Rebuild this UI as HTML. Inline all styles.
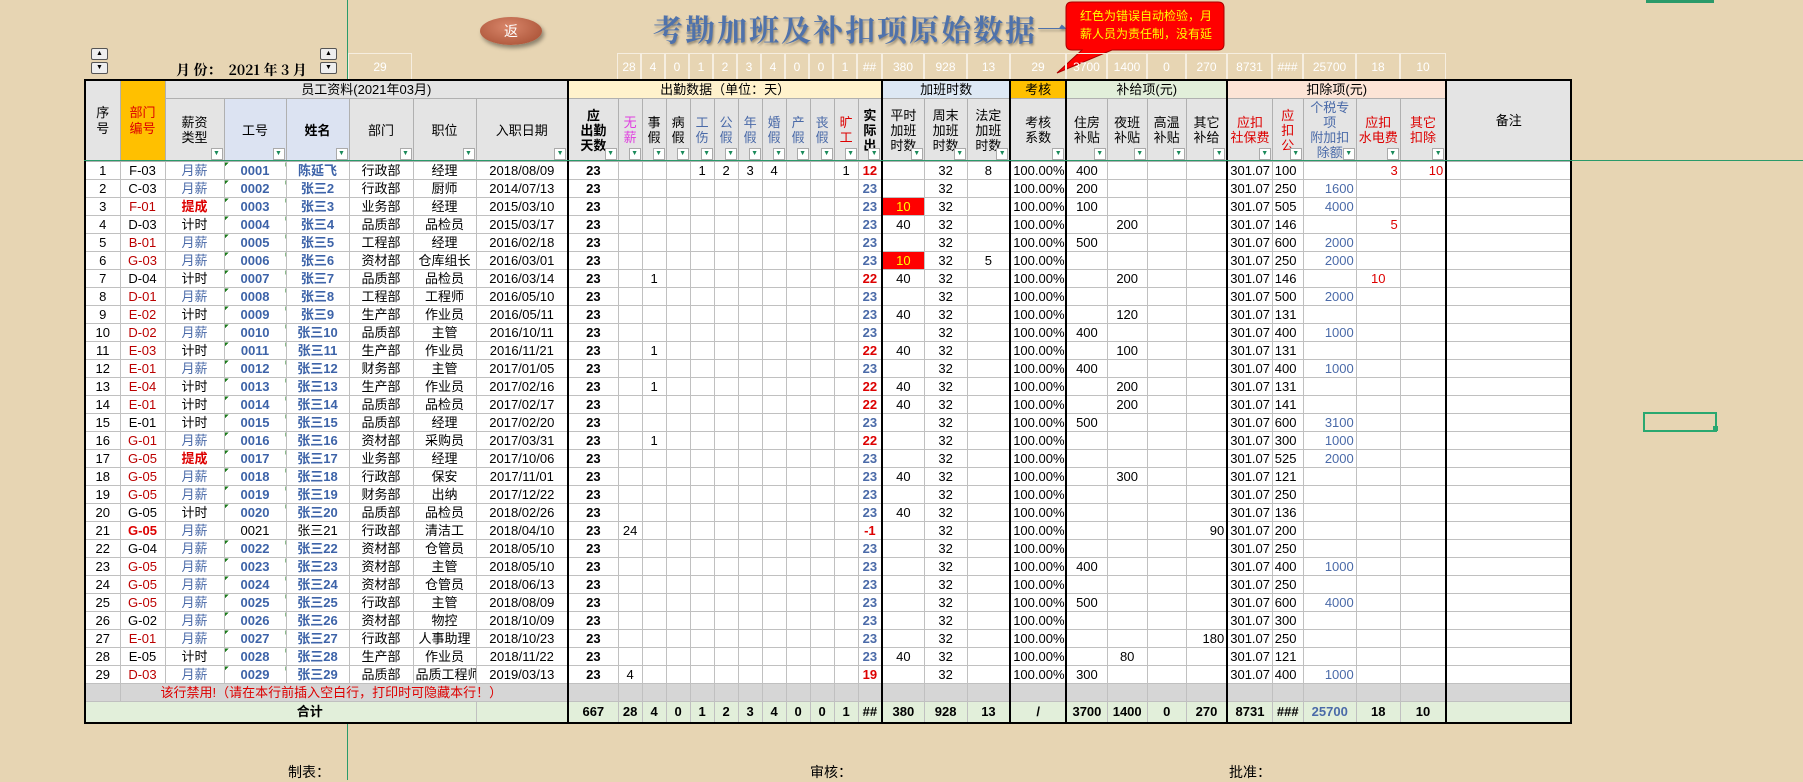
<!DOCTYPE html>
<html><head><meta charset="utf-8"><style>
body{margin:0;width:1803px;height:780px;overflow:hidden;background:#e7d5b3;font-family:"Liberation Sans Narrow","Liberation Sans","Noto Sans CJK SC",sans-serif;position:relative;font-size:13px;color:#000}
.abs{position:absolute}
table{border-collapse:collapse;table-layout:fixed;position:absolute;left:84px;top:79px;width:1487px;border:2px solid #000}
td{border:1px solid #c0c0c0;height:17px;padding:0 2px;text-align:center;white-space:nowrap;overflow:hidden;line-height:16px;background:#fff;font-size:13px}
col.L{border-left:2px solid #000}
.h1 td{background:#e4e4e4;height:17px;border-color:#b0b0b0}
.h2 td{background:#e4e4e4;height:62px;line-height:15px;border-color:#b0b0b0;position:relative;vertical-align:middle}
.h2 td i{position:absolute;right:1px;bottom:1px;width:10px;height:10px;background:#fff;border:1px solid #aaa;font-style:normal;font-size:7px;line-height:10px;color:#1a8a5a}
.r{color:#d00}.bl{color:#4a6aa8}.mg{color:#e040e0}.b{font-weight:bold}
.k{color:#b00}.id{color:#3d63a8;font-weight:bold;background:linear-gradient(135deg,#1a7a1a 3px,#fff 3px)}.nm{color:#3d63a8;font-weight:bold}
.rt{text-align:right}.lf{text-align:left}
.rb{background:#f00!important;color:#ff0}
.fb td{background:#d6d6d6}
.sum td{background:#e2efda;font-weight:bold;height:20px}
.nums{position:absolute;top:53px;height:26px;border:1px solid #f6eee0;border-bottom:none;color:#fff;font-size:12px;text-align:center;line-height:26px;box-sizing:border-box}
.btn{position:absolute;width:15px;height:10px;background:#eee;border:1px solid #555;border-radius:2px;font-size:7px;line-height:10px;text-align:center}
</style></head><body>
<div class="abs" style="left:347px;top:0;width:1px;height:780px;background:#2a9a6a"></div>
<div class="abs" style="left:1646px;top:0;width:68px;height:3px;background:#2a9a6a"></div>
<div class="abs" style="left:480px;top:17px;width:62px;height:28px;border-radius:50%;background:radial-gradient(ellipse at 45% 35%,#d9866a,#a24a2e);box-shadow:2px 3px 4px rgba(0,0,0,.4);color:#fff;text-align:center;line-height:28px;font-size:14px">返</div>
<div class="abs" style="left:653px;top:6px;font-size:30px;font-weight:bold;letter-spacing:2px;color:#4f72ab;text-shadow:1px 2px 2px rgba(0,0,0,.35);font-family:'Noto Serif CJK SC',serif">考勤加班及补扣项原始数据一览</div>
<svg class="abs" style="left:1040px;top:0" width="200" height="80"><path d="M32 2 H178 Q184 2 184 8 V44 Q184 50 178 50 H72 L17 73 L42 50 H32 Q26 50 26 44 V8 Q26 2 32 2Z" fill="#f00" stroke="#a00" stroke-width="1"/></svg>
<div class="abs" style="left:1070px;top:7px;width:152px;color:#ff0;font-size:12px;line-height:18px;text-align:center">红色为错误自动检验，月<br>薪人员为责任制，没有延</div>
<div class="btn" style="left:91px;top:48px">▲</div><div class="btn" style="left:91px;top:62px">▼</div>
<div class="btn" style="left:320px;top:48px">▲</div><div class="btn" style="left:320px;top:62px">▼</div>
<div class="abs" style="left:176px;top:60px;font-family:'Noto Serif CJK SC','Liberation Serif',serif;font-weight:bold;font-size:14px">月 份：&nbsp; 2021 年 3 月</div>
<div class="nums" style="left:348px;width:64px">29</div>
<div class="nums" style="left:617px;width:24px">28</div><div class="nums" style="left:641px;width:24px">4</div><div class="nums" style="left:665px;width:24px">0</div><div class="nums" style="left:689px;width:24px">1</div><div class="nums" style="left:713px;width:24px">2</div><div class="nums" style="left:737px;width:24px">3</div><div class="nums" style="left:761px;width:24px">4</div><div class="nums" style="left:785px;width:24px">0</div><div class="nums" style="left:809px;width:24px">0</div><div class="nums" style="left:833px;width:24px">1</div>
<div class="nums" style="left:857px;width:25px">##</div><div class="nums" style="left:882px;width:42px">380</div><div class="nums" style="left:924px;width:43px">928</div><div class="nums" style="left:967px;width:43px">13</div><div class="nums" style="left:1010px;width:56px">29</div><div class="nums" style="left:1066px;width:41px">3700</div><div class="nums" style="left:1107px;width:40px">1400</div><div class="nums" style="left:1147px;width:39px">0</div><div class="nums" style="left:1186px;width:41px">270</div><div class="nums" style="left:1227px;width:45px">8731</div><div class="nums" style="left:1272px;width:31px">###</div><div class="nums" style="left:1303px;width:53px">25700</div><div class="nums" style="left:1356px;width:44px">18</div><div class="nums" style="left:1400px;width:46px">10</div>
<table>
<colgroup><col style="width:35px"><col style="width:45px"><col style="width:59px"><col style="width:62px"><col style="width:63px"><col style="width:64px"><col style="width:63px"><col style="width:92px"><col class="L" style="width:50px"><col style="width:24px"><col style="width:24px"><col style="width:24px"><col style="width:24px"><col style="width:24px"><col style="width:24px"><col style="width:24px"><col style="width:24px"><col style="width:24px"><col style="width:24px"><col style="width:24px"><col class="L" style="width:42px"><col style="width:43px"><col style="width:43px"><col class="L" style="width:56px"><col class="L" style="width:41px"><col style="width:40px"><col style="width:39px"><col style="width:41px"><col class="L" style="width:45px"><col style="width:31px"><col style="width:53px"><col style="width:44px"><col style="width:46px"><col class="L" style="width:125px"></colgroup>
<tr class="h1"><td rowspan="2" style="height:80px">序<br>号</td><td rowspan="2" style="background:#ffc000;color:#d00">部门<br>编号</td><td colspan="6">员工资料(2021年03月)</td><td colspan="12" style="background:#fff2cc">出勤数据（单位：天）</td><td colspan="3" style="background:#dde8f4">加班时数</td><td style="background:#ffc000">考核</td><td colspan="4" style="background:#e2efda">补给项(元)</td><td colspan="5" style="background:#fce4d6">扣除项(元)</td><td rowspan="2">备注</td></tr>
<tr class="h2"><td>薪资<br>类型<i>▼</i></td><td style="background:#dce3f2">工号<i>▼</i></td><td style="background:#dce3f2" class="b">姓名<i>▼</i></td><td>部门<i>▼</i></td><td>职位<i>▼</i></td><td>入职日期<i>▼</i></td><td class="b">应<br>出勤<br>天数<i>▼</i></td><td class="mg">无<br>薪<i>▼</i></td><td>事<br>假<i>▼</i></td><td>病<br>假<i>▼</i></td><td class="bl">工<br>伤<i>▼</i></td><td class="bl">公<br>假<i>▼</i></td><td class="bl">年<br>假<i>▼</i></td><td class="bl">婚<br>假<i>▼</i></td><td class="bl">产<br>假<i>▼</i></td><td class="bl">丧<br>假<i>▼</i></td><td class="r">旷<br>工<i>▼</i></td><td class="b">实<br>际<br>出<i>▼</i></td><td>平时<br>加班<br>时数<i>▼</i></td><td>周末<br>加班<br>时数<i>▼</i></td><td>法定<br>加班<br>时数<i>▼</i></td><td>考核<br>系数<i>▼</i></td><td>住房<br>补贴<i>▼</i></td><td>夜班<br>补贴<i>▼</i></td><td>高温<br>补贴<i>▼</i></td><td>其它<br>补给<i>▼</i></td><td class="r">应扣<br>社保费<i>▼</i></td><td class="r">应<br>扣<br>公<i>▼</i></td><td class="bl">个税专<br>项<br>附加扣<br>除额<i>▼</i></td><td class="r">应扣<br>水电费<i>▼</i></td><td class="r">其它<br>扣除<i>▼</i></td></tr>
<tr><td>1</td><td>F-03</td><td class="bl">月薪</td><td class="id">0001</td><td class="nm">陈延飞</td><td>行政部</td><td>经理</td><td>2018/08/09</td><td class="b">23</td><td></td><td></td><td></td><td>1</td><td>2</td><td>3</td><td>4</td><td></td><td></td><td>1</td><td class="b r">12</td><td></td><td>32</td><td>8</td><td>100.00%</td><td>400</td><td></td><td></td><td></td><td class="lf">301.07</td><td class="lf">100</td><td></td><td class="rt r">3</td><td class="rt r">10</td><td></td></tr>
<tr><td>2</td><td>C-03</td><td class="bl">月薪</td><td class="id">0002</td><td class="nm">张三2</td><td>行政部</td><td>厨师</td><td>2014/07/13</td><td class="b">23</td><td></td><td></td><td></td><td></td><td></td><td></td><td></td><td></td><td></td><td></td><td class="b bl">23</td><td></td><td>32</td><td></td><td>100.00%</td><td>200</td><td></td><td></td><td></td><td class="lf">301.07</td><td class="lf">250</td><td class="rt bl">1600</td><td></td><td></td><td></td></tr>
<tr><td>3</td><td class="k">F-01</td><td class="r b">提成</td><td class="id">0003</td><td class="nm">张三3</td><td>业务部</td><td>经理</td><td>2015/03/10</td><td class="b">23</td><td></td><td></td><td></td><td></td><td></td><td></td><td></td><td></td><td></td><td></td><td class="b bl">23</td><td class="rb">10</td><td>32</td><td></td><td>100.00%</td><td>100</td><td></td><td></td><td></td><td class="lf">301.07</td><td class="lf">505</td><td class="rt bl">4000</td><td></td><td></td><td></td></tr>
<tr><td>4</td><td>D-03</td><td>计时</td><td class="id">0004</td><td class="nm">张三4</td><td>品质部</td><td>品检员</td><td>2015/03/17</td><td class="b">23</td><td></td><td></td><td></td><td></td><td></td><td></td><td></td><td></td><td></td><td></td><td class="b bl">23</td><td>40</td><td>32</td><td></td><td>100.00%</td><td></td><td>200</td><td></td><td></td><td class="lf">301.07</td><td class="lf">146</td><td></td><td class="rt r">5</td><td></td><td></td></tr>
<tr><td>5</td><td class="k">B-01</td><td class="bl">月薪</td><td class="id">0005</td><td class="nm">张三5</td><td>工程部</td><td>经理</td><td>2016/02/18</td><td class="b">23</td><td></td><td></td><td></td><td></td><td></td><td></td><td></td><td></td><td></td><td></td><td class="b bl">23</td><td></td><td>32</td><td></td><td>100.00%</td><td>500</td><td></td><td></td><td></td><td class="lf">301.07</td><td class="lf">600</td><td class="rt bl">2000</td><td></td><td></td><td></td></tr>
<tr><td>6</td><td class="k">G-03</td><td class="bl">月薪</td><td class="id">0006</td><td class="nm r">张三6</td><td>资材部</td><td>仓库组长</td><td>2016/03/01</td><td class="b">23</td><td></td><td></td><td></td><td></td><td></td><td></td><td></td><td></td><td></td><td></td><td class="b bl">23</td><td class="rb">10</td><td>32</td><td>5</td><td>100.00%</td><td></td><td></td><td></td><td></td><td class="lf">301.07</td><td class="lf">250</td><td class="rt bl">2000</td><td></td><td></td><td></td></tr>
<tr><td>7</td><td>D-04</td><td>计时</td><td class="id">0007</td><td class="nm">张三7</td><td>品质部</td><td>品检员</td><td>2016/03/14</td><td class="b">23</td><td></td><td>1</td><td></td><td></td><td></td><td></td><td></td><td></td><td></td><td></td><td class="b r">22</td><td>40</td><td>32</td><td></td><td>100.00%</td><td></td><td>200</td><td></td><td></td><td class="lf">301.07</td><td class="lf">146</td><td></td><td class="r">10</td><td></td><td></td></tr>
<tr><td>8</td><td class="k">D-01</td><td class="bl">月薪</td><td class="id">0008</td><td class="nm">张三8</td><td>工程部</td><td>工程师</td><td>2016/05/10</td><td class="b">23</td><td></td><td></td><td></td><td></td><td></td><td></td><td></td><td></td><td></td><td></td><td class="b bl">23</td><td></td><td>32</td><td></td><td>100.00%</td><td></td><td></td><td></td><td></td><td class="lf">301.07</td><td class="lf">500</td><td class="rt bl">2000</td><td></td><td></td><td></td></tr>
<tr><td>9</td><td class="k">E-02</td><td>计时</td><td class="id">0009</td><td class="nm">张三9</td><td>生产部</td><td>作业员</td><td>2016/05/11</td><td class="b">23</td><td></td><td></td><td></td><td></td><td></td><td></td><td></td><td></td><td></td><td></td><td class="b bl">23</td><td>40</td><td>32</td><td></td><td>100.00%</td><td></td><td>120</td><td></td><td></td><td class="lf">301.07</td><td class="lf">131</td><td></td><td></td><td></td><td></td></tr>
<tr><td>10</td><td class="k">D-02</td><td class="bl">月薪</td><td class="id">0010</td><td class="nm">张三10</td><td>品质部</td><td>主管</td><td>2016/10/11</td><td class="b">23</td><td></td><td></td><td></td><td></td><td></td><td></td><td></td><td></td><td></td><td></td><td class="b bl">23</td><td></td><td>32</td><td></td><td>100.00%</td><td>400</td><td></td><td></td><td></td><td class="lf">301.07</td><td class="lf">400</td><td class="rt bl">1000</td><td></td><td></td><td></td></tr>
<tr><td>11</td><td class="k">E-03</td><td>计时</td><td class="id">0011</td><td class="nm">张三11</td><td>生产部</td><td>作业员</td><td>2016/11/21</td><td class="b">23</td><td></td><td>1</td><td></td><td></td><td></td><td></td><td></td><td></td><td></td><td></td><td class="b r">22</td><td>40</td><td>32</td><td></td><td>100.00%</td><td></td><td>100</td><td></td><td></td><td class="lf">301.07</td><td class="lf">131</td><td></td><td></td><td></td><td></td></tr>
<tr><td>12</td><td class="k">E-01</td><td class="bl">月薪</td><td class="id">0012</td><td class="nm">张三12</td><td>财务部</td><td>主管</td><td>2017/01/05</td><td class="b">23</td><td></td><td></td><td></td><td></td><td></td><td></td><td></td><td></td><td></td><td></td><td class="b bl">23</td><td></td><td>32</td><td></td><td>100.00%</td><td>400</td><td></td><td></td><td></td><td class="lf">301.07</td><td class="lf">400</td><td class="rt bl">1000</td><td></td><td></td><td></td></tr>
<tr><td>13</td><td class="k">E-04</td><td>计时</td><td class="id">0013</td><td class="nm">张三13</td><td>生产部</td><td>作业员</td><td>2017/02/16</td><td class="b">23</td><td></td><td>1</td><td></td><td></td><td></td><td></td><td></td><td></td><td></td><td></td><td class="b r">22</td><td>40</td><td>32</td><td></td><td>100.00%</td><td></td><td>200</td><td></td><td></td><td class="lf">301.07</td><td class="lf">131</td><td></td><td></td><td></td><td></td></tr>
<tr><td>14</td><td class="k">E-01</td><td>计时</td><td class="id">0014</td><td class="nm">张三14</td><td>品质部</td><td>品检员</td><td>2017/02/17</td><td class="b">23</td><td></td><td></td><td></td><td></td><td></td><td></td><td></td><td></td><td></td><td></td><td class="b r">22</td><td>40</td><td>32</td><td></td><td>100.00%</td><td></td><td>200</td><td></td><td></td><td class="lf">301.07</td><td class="lf">141</td><td></td><td></td><td></td><td></td></tr>
<tr><td>15</td><td>E-01</td><td>计时</td><td class="id">0015</td><td class="nm">张三15</td><td>品质部</td><td>经理</td><td>2017/02/20</td><td class="b">23</td><td></td><td></td><td></td><td></td><td></td><td></td><td></td><td></td><td></td><td></td><td class="b bl">23</td><td></td><td>32</td><td></td><td>100.00%</td><td>500</td><td></td><td></td><td></td><td class="lf">301.07</td><td class="lf">600</td><td class="rt bl">3100</td><td></td><td></td><td></td></tr>
<tr><td>16</td><td class="k">G-01</td><td class="bl">月薪</td><td class="id">0016</td><td class="nm r">张三16</td><td>资材部</td><td>采购员</td><td>2017/03/31</td><td class="b">23</td><td></td><td>1</td><td></td><td></td><td></td><td></td><td></td><td></td><td></td><td></td><td class="b r">22</td><td></td><td>32</td><td></td><td>100.00%</td><td></td><td></td><td></td><td></td><td class="lf">301.07</td><td class="lf">300</td><td class="rt bl">1000</td><td></td><td></td><td></td></tr>
<tr><td>17</td><td class="k">G-05</td><td class="r b">提成</td><td class="id">0017</td><td class="nm">张三17</td><td>业务部</td><td>经理</td><td>2017/10/06</td><td class="b">23</td><td></td><td></td><td></td><td></td><td></td><td></td><td></td><td></td><td></td><td></td><td class="b bl">23</td><td></td><td>32</td><td></td><td>100.00%</td><td></td><td></td><td></td><td></td><td class="lf">301.07</td><td class="lf">525</td><td class="rt bl">2000</td><td></td><td></td><td></td></tr>
<tr><td>18</td><td class="k">G-05</td><td class="bl">月薪</td><td class="id">0018</td><td class="nm">张三18</td><td>行政部</td><td>保安</td><td>2017/11/01</td><td class="b">23</td><td></td><td></td><td></td><td></td><td></td><td></td><td></td><td></td><td></td><td></td><td class="b bl">23</td><td>40</td><td>32</td><td></td><td>100.00%</td><td></td><td>300</td><td></td><td></td><td class="lf">301.07</td><td class="lf">121</td><td></td><td></td><td></td><td></td></tr>
<tr><td>19</td><td class="k">G-05</td><td class="bl">月薪</td><td class="id">0019</td><td class="nm">张三19</td><td>财务部</td><td>出纳</td><td>2017/12/22</td><td class="b">23</td><td></td><td></td><td></td><td></td><td></td><td></td><td></td><td></td><td></td><td></td><td class="b bl">23</td><td></td><td>32</td><td></td><td>100.00%</td><td></td><td></td><td></td><td></td><td class="lf">301.07</td><td class="lf">250</td><td></td><td></td><td></td><td></td></tr>
<tr><td>20</td><td>G-05</td><td>计时</td><td class="id">0020</td><td class="nm">张三20</td><td>品质部</td><td>品检员</td><td>2018/02/26</td><td class="b">23</td><td></td><td></td><td></td><td></td><td></td><td></td><td></td><td></td><td></td><td></td><td class="b bl">23</td><td>40</td><td>32</td><td></td><td>100.00%</td><td></td><td></td><td></td><td></td><td class="lf">301.07</td><td class="lf">136</td><td></td><td></td><td></td><td></td></tr>
<tr><td>21</td><td class="r b">G-05</td><td class="bl">月薪</td><td>0021</td><td>张三21</td><td>行政部</td><td>清洁工</td><td>2018/04/10</td><td class="b">23</td><td>24</td><td></td><td></td><td></td><td></td><td></td><td></td><td></td><td></td><td></td><td class="b r">-1</td><td></td><td>32</td><td></td><td>100.00%</td><td></td><td></td><td></td><td class="rt">90</td><td class="lf">301.07</td><td class="lf">200</td><td></td><td></td><td></td><td></td></tr>
<tr><td>22</td><td>G-04</td><td class="bl">月薪</td><td class="id">0022</td><td class="nm">张三22</td><td>资材部</td><td>仓管员</td><td>2018/05/10</td><td class="b">23</td><td></td><td></td><td></td><td></td><td></td><td></td><td></td><td></td><td></td><td></td><td class="b bl">23</td><td></td><td>32</td><td></td><td>100.00%</td><td></td><td></td><td></td><td></td><td class="lf">301.07</td><td class="lf">250</td><td></td><td></td><td></td><td></td></tr>
<tr><td>23</td><td class="k">G-05</td><td class="bl">月薪</td><td class="id">0023</td><td class="nm">张三23</td><td>资材部</td><td>主管</td><td>2018/05/10</td><td class="b">23</td><td></td><td></td><td></td><td></td><td></td><td></td><td></td><td></td><td></td><td></td><td class="b bl">23</td><td></td><td>32</td><td></td><td>100.00%</td><td>400</td><td></td><td></td><td></td><td class="lf">301.07</td><td class="lf">400</td><td class="rt bl">1000</td><td></td><td></td><td></td></tr>
<tr><td>24</td><td class="k">G-05</td><td class="bl">月薪</td><td class="id">0024</td><td class="nm">张三24</td><td>资材部</td><td>仓管员</td><td>2018/06/13</td><td class="b">23</td><td></td><td></td><td></td><td></td><td></td><td></td><td></td><td></td><td></td><td></td><td class="b bl">23</td><td></td><td>32</td><td></td><td>100.00%</td><td></td><td></td><td></td><td></td><td class="lf">301.07</td><td class="lf">250</td><td></td><td></td><td></td><td></td></tr>
<tr><td>25</td><td class="k">G-05</td><td class="bl">月薪</td><td class="id">0025</td><td class="nm">张三25</td><td>行政部</td><td>主管</td><td>2018/08/09</td><td class="b">23</td><td></td><td></td><td></td><td></td><td></td><td></td><td></td><td></td><td></td><td></td><td class="b bl">23</td><td></td><td>32</td><td></td><td>100.00%</td><td>500</td><td></td><td></td><td></td><td class="lf">301.07</td><td class="lf">600</td><td class="rt bl">4000</td><td></td><td></td><td></td></tr>
<tr><td>26</td><td>G-02</td><td class="bl">月薪</td><td class="id">0026</td><td class="nm">张三26</td><td>资材部</td><td>物控</td><td>2018/10/09</td><td class="b">23</td><td></td><td></td><td></td><td></td><td></td><td></td><td></td><td></td><td></td><td></td><td class="b bl">23</td><td></td><td>32</td><td></td><td>100.00%</td><td></td><td></td><td></td><td></td><td class="lf">301.07</td><td class="lf">300</td><td></td><td></td><td></td><td></td></tr>
<tr><td>27</td><td class="k">E-01</td><td class="bl">月薪</td><td class="id">0027</td><td class="nm">张三27</td><td>行政部</td><td>人事助理</td><td>2018/10/23</td><td class="b">23</td><td></td><td></td><td></td><td></td><td></td><td></td><td></td><td></td><td></td><td></td><td class="b bl">23</td><td></td><td>32</td><td></td><td>100.00%</td><td></td><td></td><td></td><td class="rt">180</td><td class="lf">301.07</td><td class="lf">250</td><td></td><td></td><td></td><td></td></tr>
<tr><td>28</td><td>E-05</td><td>计时</td><td class="id">0028</td><td class="nm">张三28</td><td>生产部</td><td>作业员</td><td>2018/11/22</td><td class="b">23</td><td></td><td></td><td></td><td></td><td></td><td></td><td></td><td></td><td></td><td></td><td class="b bl">23</td><td>40</td><td>32</td><td></td><td>100.00%</td><td></td><td>80</td><td></td><td></td><td class="lf">301.07</td><td class="lf">121</td><td></td><td></td><td></td><td></td></tr>
<tr><td>29</td><td class="k">D-03</td><td class="bl">月薪</td><td class="id">0029</td><td class="nm">张三29</td><td>品质部</td><td>品质工程师</td><td>2019/03/13</td><td class="b">23</td><td>4</td><td></td><td></td><td></td><td></td><td></td><td></td><td></td><td></td><td></td><td class="b r">19</td><td></td><td>32</td><td></td><td>100.00%</td><td>300</td><td></td><td></td><td></td><td class="lf">301.07</td><td class="lf">400</td><td class="rt bl">1000</td><td></td><td></td><td></td></tr>
<tr class="fb"><td></td><td colspan="7" class="r" style="text-align:left;padding-left:40px;overflow:visible">该行禁用!（请在本行前插入空白行，打印时可隐藏本行！）</td><td></td><td></td><td></td><td></td><td></td><td></td><td></td><td></td><td></td><td></td><td></td><td></td><td></td><td></td><td></td><td></td><td></td><td></td><td></td><td></td><td></td><td></td><td></td><td></td><td></td><td></td></tr>
<tr class="sum"><td colspan="7" style="text-align:center;padding-left:60px">合计</td><td></td><td>667</td><td>28</td><td>4</td><td>0</td><td>1</td><td>2</td><td>3</td><td>4</td><td>0</td><td>0</td><td>1</td><td>##</td><td>380</td><td>928</td><td>13</td><td>/</td><td>3700</td><td>1400</td><td>0</td><td>270</td><td>8731</td><td>###</td><td class="bl">25700</td><td>18</td><td>10</td><td></td></tr>
</table>
<div class="abs" style="left:84px;top:160px;width:1720px;height:1px;background:#2a9a6a"></div>
<div class="abs" style="left:1643px;top:412px;width:70px;height:16px;border:2px solid #2aa870"></div>
<div class="abs" style="left:1713px;top:426px;width:5px;height:5px;background:#2aa870"></div>
<div class="abs" style="left:288px;top:762px;font-size:14px">制表：</div>
<div class="abs" style="left:810px;top:762px;font-size:14px">审核：</div>
<div class="abs" style="left:1229px;top:762px;font-size:14px">批准：</div>
</body></html>
